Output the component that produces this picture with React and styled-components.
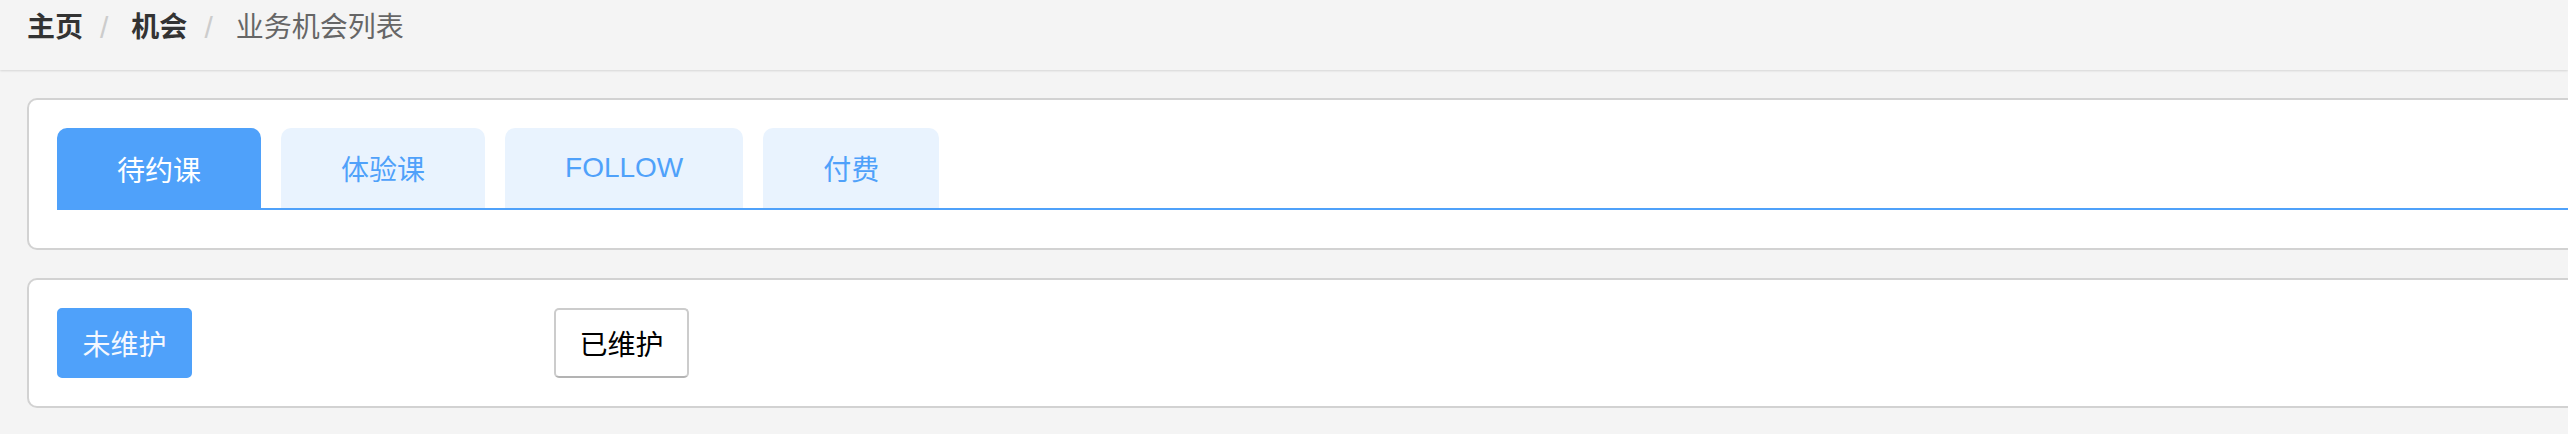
import React, { useState } from "react";
import styled, { createGlobalStyle } from "styled-components";

const GlobalStyle = createGlobalStyle`
  html, body {
    margin: 0;
    padding: 0;
    background: #f4f4f4;
    overflow: hidden;
  }
  body {
    font-family: "Liberation Sans", "Noto Sans CJK SC", sans-serif;
    color: #333;
  }
`;

const Page = styled.div`
  width: 2568px;
  min-height: 434px;
  background: #f4f4f4;
`;

const Header = styled.div`
  height: 70px;
  box-sizing: border-box;
  padding: 8px 0 0 27px;
  background: #f4f4f4;
  box-shadow: 0 1px 2px rgba(0, 0, 0, 0.12);
  position: relative;
  z-index: 1;
`;

const Breadcrumb = styled.ol`
  display: flex;
  align-items: center;
  margin: 0;
  padding: 0;
  list-style: none;
  font-size: 28px;
  line-height: 40px;
`;

const Crumb = styled.li`
  font-weight: ${(p) => (p.$current ? 400 : 700)};
  color: ${(p) => (p.$current ? "#666" : "#333")};
`;

const Sep = styled.li`
  color: #ccc;
  font-size: 30px;
  padding: 0 23px 0 17px;
`;

const Main = styled.div`
  width: 2620px;
  padding: 28px 0 0 27px;
  display: flex;
  flex-direction: column;
  gap: 28px;
`;

const Card = styled.div`
  background: #fff;
  border: 2px solid #d2d2d2;
  border-radius: 10px;
  padding: ${(p) => p.$pad};
`;

const TabBar = styled.ul`
  display: flex;
  gap: 20px;
  margin: 0;
  padding: 0;
  list-style: none;
  border-bottom: 2px solid #4fa1fa;
  height: 80px;
`;

const Tab = styled.li`
  height: ${(p) => (p.$active ? "82px" : "80px")};
  padding: 0 60px;
  display: flex;
  align-items: center;
  justify-content: center;
  border-radius: 10px 10px 0 0;
  font-size: 28px;
  cursor: pointer;
  background: ${(p) => (p.$active ? "#4fa1fa" : "#e9f3fe")};
  color: ${(p) => (p.$active ? "#fff" : "#4fa1fa")};
`;

const ButtonRow = styled.div`
  display: flex;
  gap: 362px;
`;

const Button = styled.button`
  height: 70px;
  width: 135px;
  box-sizing: border-box;
  border-radius: 5px;
  font-family: inherit;
  font-size: 28px;
  padding: 0;
  cursor: pointer;
  border: 2px solid ${(p) => (p.$primary ? "#4fa1fa" : "#cccccc")};
  border-bottom-color: ${(p) => (p.$primary ? "#4fa1fa" : "#b3b3b3")};
  background: ${(p) => (p.$primary ? "#4fa1fa" : "#fff")};
  color: ${(p) => (p.$primary ? "#f4f8ff" : "#000")};
`;

const tabs = ["待约课", "体验课", "FOLLOW", "付费"];

export default function App() {
  const [active, setActive] = useState(0);
  const [maintained, setMaintained] = useState(false);

  return (
    <Page>
      <GlobalStyle />
      <Header>
        <Breadcrumb>
          <Crumb>主页</Crumb>
          <Sep>/</Sep>
          <Crumb>机会</Crumb>
          <Sep>/</Sep>
          <Crumb $current>业务机会列表</Crumb>
        </Breadcrumb>
      </Header>
      <Main>
        <Card $pad="28px 28px 38px">
          <TabBar>
            {tabs.map((t, i) => (
              <Tab key={t} $active={i === active} onClick={() => setActive(i)}>
                {t}
              </Tab>
            ))}
          </TabBar>
        </Card>
        <Card $pad="28px 28px 28px">
          <ButtonRow>
            <Button $primary={!maintained} onClick={() => setMaintained(false)}>
              未维护
            </Button>
            <Button $primary={maintained} onClick={() => setMaintained(true)}>
              已维护
            </Button>
          </ButtonRow>
        </Card>
      </Main>
    </Page>
  );
}
